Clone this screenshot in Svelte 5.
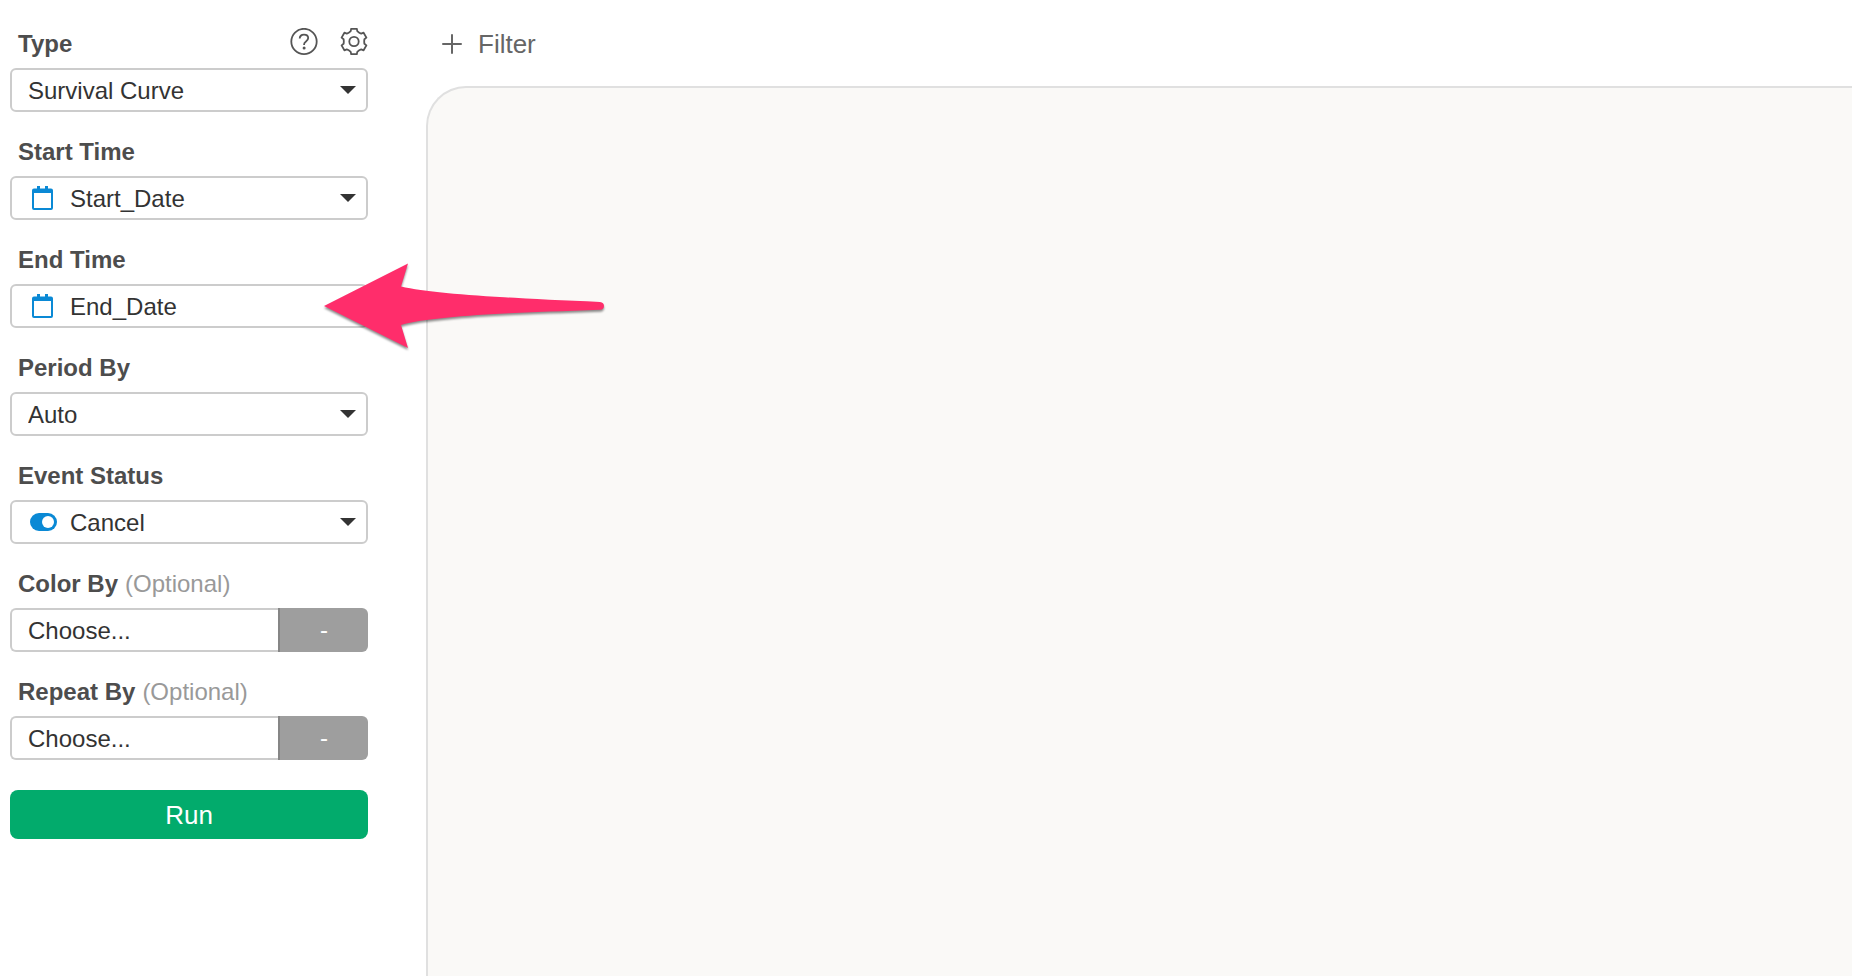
<script>
  const fields = [
    { id: 'type', label: 'Type', options: ['Survival Curve', 'Bar', 'Line'], tools: true },
    { id: 'start-time', label: 'Start Time', options: ['Start_Date', 'End_Date'], icon: 'date' },
    { id: 'end-time', label: 'End Time', options: ['End_Date', 'Start_Date'], icon: 'date', pointed: true },
    { id: 'period-by', label: 'Period By', options: ['Auto', 'Day', 'Month', 'Year'] },
    { id: 'event-status', label: 'Event Status', options: ['Cancel'], icon: 'logical' },
    { id: 'color-by', label: 'Color By', options: ['Choose...'], optional: true },
    { id: 'repeat-by', label: 'Repeat By', options: ['Choose...'], optional: true }
  ];

  let values = $state(Object.fromEntries(fields.map((f) => [f.id, f.options[0]])));
</script>

<div class="layout">
  <form class="sidebar" onsubmit={(e) => e.preventDefault()}>
    {#each fields as field}
      <div class="field">
        <div class="field-head">
          <label for={field.id}>{field.label}</label>
          {#if field.optional}
            <span class="optional">(Optional)</span>
          {/if}
          {#if field.tools}
            <div class="tools">
              <button type="button" class="tool" aria-label="Help">
                <svg width="28" height="28" viewBox="0 0 28 28">
                  <circle cx="14" cy="13.5" r="12.7" />
                  <path d="M9.7 10.5c0-2.3 1.7-3.8 4.3-3.8 2.5 0 4.2 1.4 4.2 3.4 0 1.6-.8 2.4-2.2 3.4-1.4 1-1.9 1.6-1.9 2.7v.8" />
                  <circle class="dot" cx="14.1" cy="20" r="1.5" />
                </svg>
              </button>
              <button type="button" class="tool" aria-label="Settings">
                <svg width="28" height="28" viewBox="0 0 28 28">
                  <g transform="translate(14 13.5)">
                    <circle r="4.7" />
                    <path d="M-2.8-12.7H2.8L3.3-10.4Q5.2-8.5 7.2-7.9L9.6-8.8 12.4-3.9 10.4-2.3Q10 0 10.4 2.3L12.4 3.9 9.6 8.8 7.2 7.9Q5.2 8.5 3.3 10.4L2.8 12.7H-2.8L-3.3 10.4Q-5.2 8.5-7.2 7.9L-9.6 8.8-12.4 3.9-10.4 2.3Q-10 0-10.4-2.3L-12.4-3.9-9.6-8.8-7.2-7.9Q-5.2-8.5-3.3-10.4z" />
                  </g>
                </svg>
              </button>
            </div>
          {/if}
        </div>

        {#if field.optional}
          <div class="group">
            <select id={field.id} bind:value={values[field.id]}>
              {#each field.options as option}
                <option>{option}</option>
              {/each}
            </select>
            <button type="button" class="addon">-</button>
          </div>
        {:else}
          <div class="control">
            <select id={field.id} class:with-icon={field.icon} bind:value={values[field.id]}>
              {#each field.options as option}
                <option>{option}</option>
              {/each}
            </select>
            {#if field.icon === 'date'}
              <svg class="type-icon" width="28" height="24" viewBox="0 0 28 24">
                <path fill-rule="evenodd" d="M7 0h3v2.5h5V0h3v2.5h3a2 2 0 0 1 2 2V22a2 2 0 0 1-2 2H4a2 2 0 0 1-2-2V4.500a2 2 0 0 1 2-2h3zM4 7v15h17V7z" />
              </svg>
            {:else if field.icon === 'logical'}
              <svg class="type-icon" width="28" height="24" viewBox="0 0 28 24">
                <rect y="3" width="27" height="18" rx="9" />
                <circle cx="18" cy="12" r="6" fill="#fff" />
              </svg>
            {/if}
            <svg class="caret" width="16" height="8" viewBox="0 0 16 8">
              <path d="M0 0h16L8 8z" />
            </svg>
            {#if field.pointed}
              <svg class="pointer" width="282" height="86" viewBox="0 0 282 86">
                <path d="M0 43 84 0.5 77 23.5C110 31 180 35 276 39Q280 39.500 280 43T276 46.700C180 50 110 53 77 62L84 85z" />
              </svg>
            {/if}
          </div>
        {/if}
      </div>
    {/each}
    <button class="run">Run</button>
  </form>

  <main>
    <div class="filter-bar">
      <button type="button" class="filter">
        <svg width="20" height="20" viewBox="0 0 20 20">
          <path d="M10 1v18M1 10h18" />
        </svg>
        Filter
      </button>
    </div>
    <section class="canvas" aria-label="Chart"></section>
  </main>
</div>

<style>
  :global(body) {
    background: #fff;
  }
  .layout {
    display: grid;
    grid-template-columns: 358px 1fr;
    column-gap: 58px;
    min-height: 100vh;
    padding-left: 10px;
    box-sizing: border-box;
    font-family: "Helvetica Neue", "Liberation Sans", Arial, sans-serif;
    font-size: 24px;
    line-height: 28px;
    color: #333;
  }
  button,
  select {
    font: inherit;
    margin: 0;
    cursor: pointer;
  }
  .sidebar {
    display: flex;
    flex-direction: column;
    gap: 24px;
    padding: 28px 0;
  }
  .field-head {
    display: flex;
    align-items: flex-end;
    gap: 7px;
    height: 30px;
    padding-left: 8px;
    margin-bottom: 10px;
  }
  label {
    font-weight: bold;
    color: #4d4d4d;
  }
  .optional {
    font-weight: 300;
    color: #999;
  }
  .tools {
    display: flex;
    gap: 22px;
    height: 100%;
    margin-left: auto;
  }
  .tool {
    display: block;
    width: 28px;
    height: 28px;
    padding: 0;
    border: none;
    background: none;
  }
  .tool svg {
    display: block;
    fill: none;
    stroke: #555;
    stroke-width: 1.8;
    stroke-linejoin: round;
  }
  .tool .dot {
    fill: #555;
    stroke: none;
  }
  .control {
    position: relative;
    display: grid;
    align-items: center;
  }
  .control > select,
  .type-icon,
  .caret {
    grid-area: 1 / 1;
  }
  select {
    appearance: none;
    width: 100%;
    height: 44px;
    padding: 2px 16px 0;
    border: 2px solid #ccc;
    border-radius: 6px;
    box-sizing: border-box;
    background: #fff;
    color: #333;
  }
  select.with-icon {
    padding-left: 58px;
  }
  .type-icon,
  .caret {
    pointer-events: none;
  }
  .type-icon {
    margin-left: 20px;
    fill: #0a89d5;
  }
  .caret {
    justify-self: end;
    margin-right: 12px;
    fill: #333;
  }
  .pointer {
    position: absolute;
    left: 314px;
    top: -21px;
    z-index: 1;
    overflow: visible;
    fill: #ff2d6b;
    filter: drop-shadow(0 2px 1px rgba(0, 0, 0, 0.45));
    pointer-events: none;
  }
  .group {
    display: flex;
  }
  .group select {
    flex: 1;
    border-right: none;
    border-radius: 6px 0 0 6px;
  }
  .addon {
    width: 90px;
    padding: 0;
    border: none;
    border-left: 2px solid #868686;
    border-radius: 0 6px 6px 0;
    background: #9e9e9e;
    color: #fff;
  }
  .run {
    height: 49px;
    margin-top: 6px;
    border: none;
    border-radius: 8px;
    background: #02ab6c;
    color: #fff;
    font-size: 26px;
  }
  main {
    display: flex;
    flex-direction: column;
    min-width: 0;
  }
  .filter-bar {
    display: flex;
    align-items: center;
    height: 86px;
    padding: 2px 0 0 16px;
    box-sizing: border-box;
  }
  .filter {
    display: flex;
    align-items: center;
    gap: 16px;
    padding: 0;
    border: none;
    background: none;
    color: #666;
    font-size: 26px;
  }
  .filter svg {
    fill: none;
    stroke: #666;
    stroke-width: 2;
    stroke-linecap: round;
  }
  .canvas {
    flex: 1;
    border: 2px solid #e0e0e0;
    border-width: 2px 0 0 2px;
    border-top-left-radius: 40px;
    background: #faf9f7;
  }
</style>
